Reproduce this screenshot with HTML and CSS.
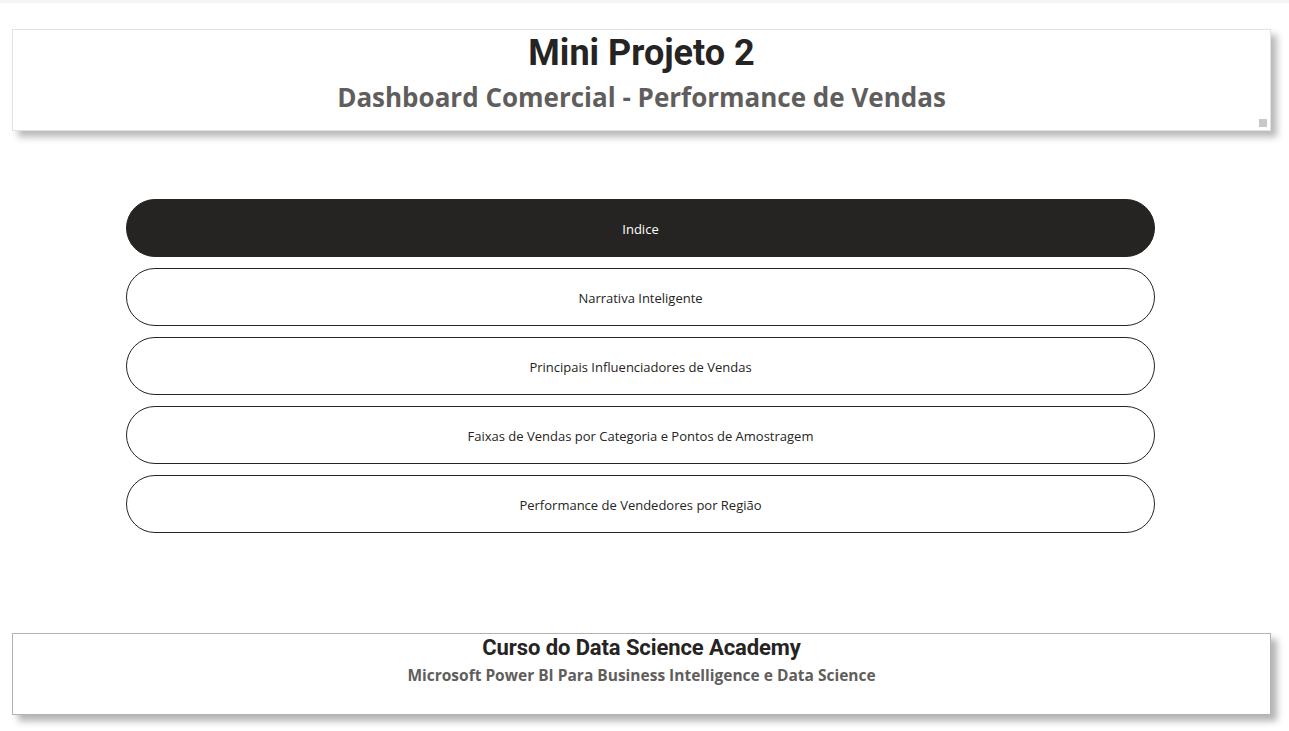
FILE: index.html
```html
<!DOCTYPE html>
<html lang="pt">
<head>
<meta charset="utf-8">
<title>Mini Projeto 2</title>
<link rel="stylesheet" href="styles.css">
</head>
<body>
<div class="page">
  <header class="card header">
    <h1 class="title">Mini Projeto 2</h1>
    <h2 class="subtitle">Dashboard Comercial - Performance de Vendas</h2>
    <span class="grip"></span>
  </header>
  <nav class="menu">
    <a class="btn active">Indice</a>
    <a class="btn">Narrativa Inteligente</a>
    <a class="btn">Principais Influenciadores de Vendas</a>
    <a class="btn">Faixas de Vendas por Categoria e Pontos de Amostragem</a>
    <a class="btn">Performance de Vendedores por Região</a>
  </nav>
  <footer class="card footer">
    <div class="ftitle">Curso do Data Science Academy</div>
    <div class="fsub">Microsoft Power BI Para Business Intelligence e Data Science</div>
  </footer>
</div>
</body>
</html>
```

FILE: styles.css
```css
html, body {
  margin: 0;
  padding: 0;
  background: #ffffff;
}
body {
  width: 1289px;
  height: 731px;
  overflow: hidden;
  border-top: 3px solid #f4f4f4;
  box-sizing: border-box;
}
.page {
  display: flex;
  flex-direction: column;
  padding-left: 12px;
}
.card {
  position: relative;
  width: 1259px;
  box-sizing: border-box;
  background: #fff;
  display: flex;
  flex-direction: column;
  align-items: center;
}
.header {
  margin-top: 26px;
  height: 102px;
  border: 1px solid #e2e2e2;
  box-shadow: 6px 6px 7px rgba(0,0,0,0.28);
  padding-top: 2px;
}
.title {
  margin: 0;
  font-family: "Roboto", "DejaVu Sans Condensed", sans-serif;
  font-weight: 700;
  font-size: 36px;
  line-height: 42px;
  color: #252423;
  letter-spacing: 0;
}
.subtitle {
  margin: 3px 0 0;
  font-family: "Open Sans", "Noto Sans", sans-serif;
  font-weight: 700;
  font-size: 26px;
  line-height: 40px;
  color: #605e5c;
}
.grip {
  position: absolute;
  right: 3px;
  bottom: 3px;
  width: 8px;
  height: 8px;
  background: #c8c8c8;
}
.menu {
  margin-top: 68px;
  margin-left: 114px;
  width: 1029px;
  display: flex;
  flex-direction: column;
  gap: 11px;
}
.btn {
  height: 58px;
  box-sizing: border-box;
  border: 1px solid #252423;
  border-radius: 29px;
  padding-top: 2px;
  display: flex;
  align-items: center;
  justify-content: center;
  font-family: "Open Sans", "Noto Sans", sans-serif;
  font-size: 13px;
  color: #252423;
  background: #fff;
}
.btn.active {
  background: #252423;
  color: #fff;
}
.footer {
  margin-top: 100px;
  height: 82px;
  border: 1px solid #b3b3b3;
  box-shadow: 6px 6px 7px rgba(0,0,0,0.3);
  padding-top: 0;
}
.ftitle {
  font-family: "Roboto", "DejaVu Sans Condensed", sans-serif;
  font-weight: 700;
  font-size: 22px;
  line-height: 27px;
  color: #252423;
  letter-spacing: -0.1px;
}
.fsub {
  font-family: "Open Sans", "Noto Sans", sans-serif;
  font-weight: 700;
  font-size: 15.5px;
  line-height: 28px;
  color: #605e5c;
}
```
